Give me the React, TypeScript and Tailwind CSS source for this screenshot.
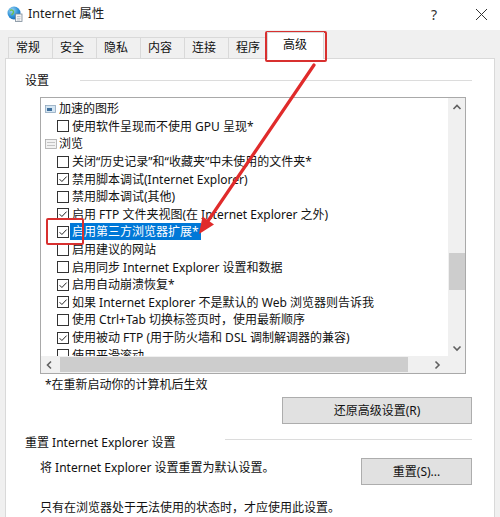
import React from "react";

type Item =
  | { kind: "group"; label: string; icon: "gpu" | "browse" }
  | { kind: "check"; label: string; checked: boolean; selected?: boolean };

const items: Item[] = [
  { kind: "group", label: "加速的图形", icon: "gpu" },
  { kind: "check", label: "使用软件呈现而不使用 GPU 呈现*", checked: false },
  { kind: "group", label: "浏览", icon: "browse" },
  { kind: "check", label: "关闭“历史记录”和“收藏夹”中未使用的文件夹*", checked: false },
  { kind: "check", label: "禁用脚本调试(Internet Explorer)", checked: true },
  { kind: "check", label: "禁用脚本调试(其他)", checked: false },
  { kind: "check", label: "启用 FTP 文件夹视图(在 Internet Explorer 之外)", checked: true },
  { kind: "check", label: "启用第三方浏览器扩展*", checked: true, selected: true },
  { kind: "check", label: "启用建议的网站", checked: false },
  { kind: "check", label: "启用同步 Internet Explorer 设置和数据", checked: false },
  { kind: "check", label: "启用自动崩溃恢复*", checked: true },
  { kind: "check", label: "如果 Internet Explorer 不是默认的 Web 浏览器则告诉我", checked: true },
  { kind: "check", label: "使用 Ctrl+Tab 切换标签页时，使用最新顺序", checked: false },
  { kind: "check", label: "使用被动 FTP (用于防火墙和 DSL 调制解调器的兼容)", checked: true },
  { kind: "check", label: "使用平滑滚动", checked: false },
];

const tabs = [
  { label: "常规", w: "w-[45px]" },
  { label: "安全", w: "w-[45px]" },
  { label: "隐私", w: "w-[45px]" },
  { label: "内容", w: "w-[45px]" },
  { label: "连接", w: "w-[45px]" },
  { label: "程序", w: "w-[41px]" },
];

function IeIcon() {
  return (
    <svg width="16" height="16" viewBox="0 0 16 16">
      <defs>
        <radialGradient id="g" cx="0.35" cy="0.3" r="0.8">
          <stop offset="0" stopColor="#9fd6f5" />
          <stop offset="0.6" stopColor="#2b8fd6" />
          <stop offset="1" stopColor="#175fa8" />
        </radialGradient>
      </defs>
      <circle cx="7" cy="7" r="6.5" fill="url(#g)" />
      <path d="M3 4.5c1.5-1 3-.5 3.5 1s-1 2.5-2 3.5" stroke="#6bbf4e" strokeWidth="1.4" fill="none" />
      <rect x="8.5" y="8" width="6.5" height="7.5" fill="#f4f4f4" stroke="#7a8a9a" strokeWidth="0.8" />
      <path d="M10 10.5h3.5M10 12.3h3.5M10 14h3" stroke="#9aa8b6" strokeWidth="0.6" />
    </svg>
  );
}

function GroupIcon({ type }: { type: "gpu" | "browse" }) {
  if (type === "gpu") {
    return (
      <svg width="12" height="10" viewBox="0 0 12 10">
        <rect x="0.5" y="1.5" width="10" height="7" fill="#d5e6f3" stroke="#8fa7bd" strokeWidth="0.8" />
        <rect x="2" y="4" width="5" height="3" fill="#3f6f9c" />
      </svg>
    );
  }
  return (
    <svg width="12" height="10" viewBox="0 0 12 10">
      <rect x="0.5" y="0.5" width="11" height="9" fill="#f2f2f2" stroke="#a8a8a8" strokeWidth="0.8" />
      <path d="M2 3.5h8M2 6.5h8" stroke="#b8b8b8" strokeWidth="0.8" />
    </svg>
  );
}

function CheckBox({ checked }: { checked: boolean }) {
  return (
    <span className="flex h-[12px] w-[12px] shrink-0 items-center justify-center border border-[#333333] bg-white">
      {checked && (
        <svg width="10" height="10" viewBox="0 0 10 10">
          <path d="M1.6 5.2l2.3 2.3L8.6 2.6" stroke="#222222" strokeWidth="1" fill="none" />
        </svg>
      )}
    </span>
  );
}

function Chevron({ dir }: { dir: "up" | "down" | "left" | "right" }) {
  const d = {
    up: "M1.5 6L5 2.5 8.5 6",
    down: "M1.5 3.5L5 7 8.5 3.5",
    left: "M6 1.5L2.5 5 6 8.5",
    right: "M3.5 1.5L7 5 3.5 8.5",
  }[dir];
  return (
    <svg width="10" height="10" viewBox="0 0 10 10">
      <path d={d} stroke="#606060" strokeWidth="1.6" fill="none" />
    </svg>
  );
}

export default function App() {
  return (
    <div className="relative h-[517px] w-[500px] overflow-hidden bg-[#f0f0f0] font-['Noto_Sans','Noto_Sans_CJK_SC',sans-serif] text-[12px] text-[#111111]">
      {/* title bar */}
      <div className="flex h-[30px] items-center bg-white pb-[2px] pl-[7px] pr-[12px]">
        <IeIcon />
        <span className="ml-[5px] text-[12.5px] text-[#1a1a1a]">Internet 属性</span>
        <span className="ml-auto mr-[38px] text-[14px] text-[#333333]">?</span>
        <svg width="13" height="13" viewBox="0 0 13 13">
          <path d="M1 1l11 11M12 1L1 12" stroke="#333333" strokeWidth="1" />
        </svg>
      </div>

      {/* tabs */}
      <div className="flex h-[28px] items-end pl-[8px]">
        {tabs.map((t, i) => (
          <div
            key={t.label}
            className={`${t.w} ${i > 0 ? "-ml-px" : ""} flex h-[21px] items-center border border-b-0 border-[#d9d9d9] pl-[7px]`}
          >
            {t.label}
          </div>
        ))}
        <div className="relative z-10 -mb-px -ml-[2px] flex h-[27px] w-[57px] items-center border border-b-0 border-[#d9d9d9] bg-white pb-[2px] pl-[15px]">
          高级
        </div>
      </div>

      {/* panel */}
      <div className="mx-[5px] flex h-[470px] flex-col border border-[#d9d9d9] bg-white pl-[19px] pr-[22px]">
        <div className="mt-[13px] flex h-[17px] items-center">
          <span className="w-[55px]">设置</span>
          <span className="h-px flex-1 bg-[#dcdcdc]" />
        </div>

        {/* list box */}
        <div className="ml-[15px] mt-[8px] flex h-[277px] w-[426px] flex-col border border-[#a9a9a9]">
          <div className="flex min-h-0 flex-1">
            <div className="min-w-0 flex-1 overflow-hidden pt-[2px]">
              {items.map((it) =>
                it.kind === "group" ? (
                  <div key={it.label} className="flex h-[17.6px] items-center whitespace-nowrap pl-[4px]">
                    <GroupIcon type={it.icon} />
                    <span className="ml-[2px]">{it.label}</span>
                  </div>
                ) : (
                  <div key={it.label} className="flex h-[17.6px] items-center whitespace-nowrap pl-[16px]">
                    <CheckBox checked={it.checked} />
                    <span
                      className={`ml-[1px] px-[2px] leading-[17px] ${it.selected ? "bg-[#0078d7] text-white" : ""}`}
                    >
                      {it.label}
                    </span>
                  </div>
                )
              )}
            </div>
            {/* vertical scrollbar */}
            <div className="flex w-[17px] flex-col items-center bg-[#f0f0f0]">
              <div className="flex h-[17px] items-center justify-center pt-[2px]">
                <Chevron dir="up" />
              </div>
              <div className="mt-[138px] h-[37px] w-[16px] bg-[#cdcdcd]" />
              <div className="mt-auto flex h-[17px] items-center justify-center">
                <Chevron dir="down" />
              </div>
            </div>
          </div>
          {/* horizontal scrollbar */}
          <div className="flex h-[17px] items-center bg-[#f0f0f0]">
            <div className="flex w-[17px] items-center justify-center">
              <Chevron dir="left" />
            </div>
            <div className="ml-[2px] h-[15px] w-[348px] bg-[#cdcdcd]" />
            <div className="ml-[20px] flex w-[17px] items-center justify-center">
              <Chevron dir="right" />
            </div>
          </div>
        </div>

        <div className="ml-[20px] mt-[2px] leading-[17px]">*在重新启动你的计算机后生效</div>

        <button className="mt-[4px] h-[27px] w-[190px] self-end border border-[#adadad] bg-[#e1e1e1] text-[12px]">
          还原高级设置(R)
        </button>

        <div className="mt-[10px] flex h-[17px] items-center">
          <span className="w-[200px] whitespace-nowrap">重置 Internet Explorer 设置</span>
          <span className="mb-[6px] h-px flex-1 bg-[#dcdcdc]" />
        </div>

        <div className="mt-[7px] flex items-start justify-between">
          <span className="ml-[15px] mt-[1px] leading-[17px]">将 Internet Explorer 设置重置为默认设置。</span>
          <button className="h-[27px] w-[111px] border border-[#adadad] bg-[#e1e1e1] text-[12px]">重置(S)...</button>
        </div>

        <div className="ml-[15px] mt-[15px] leading-[16px]">只有在浏览器处于无法使用的状态时，才应使用此设置。</div>
      </div>

      {/* annotations */}
      <div className="pointer-events-none absolute left-[265px] top-[31px] h-[31px] w-[62px] rounded-[2px] border-2 border-[#d8302f]" />
      <div className="pointer-events-none absolute left-[46px] top-[218px] h-[27px] w-[38px] rounded-[2px] border-2 border-[#d8302f]" />
      <svg className="pointer-events-none absolute left-0 top-0" width="500" height="517" viewBox="0 0 500 517">
        <line x1="314" y1="65" x2="208" y2="221" stroke="#e02b2b" strokeWidth="3.2" strokeLinecap="round" />
        <polygon points="199,234 214,224.5 202.5,216.5" fill="#e02b2b" />
      </svg>
    </div>
  );
}
